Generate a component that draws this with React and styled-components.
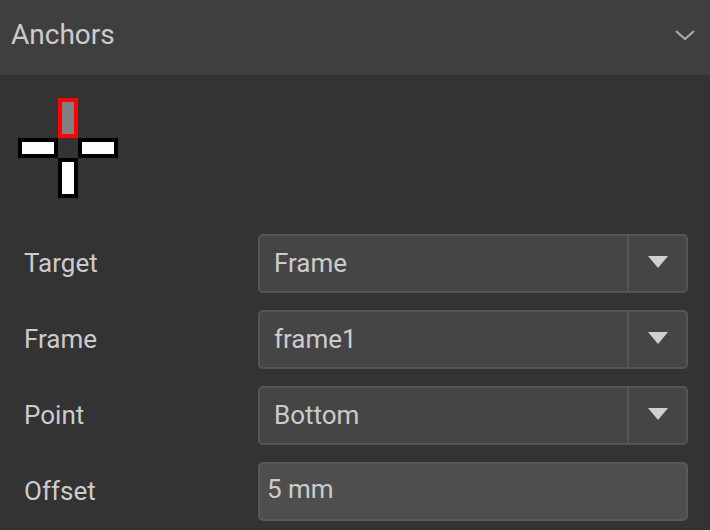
import styled, { createGlobalStyle } from 'styled-components';

const GlobalStyle = createGlobalStyle`
  html, body {
    margin: 0;
    padding: 0;
    background: #333333;
  }
  body {
    font-family: Roboto, "Liberation Sans", sans-serif;
  }
`;

const Panel = styled.div`
  width: 710px;
  height: 530px;
  background: #333333;
  overflow: hidden;
`;

const Header = styled.div`
  height: 75px;
  background: #3f3f3f;
  display: flex;
  align-items: center;
  justify-content: space-between;
  padding: 0 14px 6px 11px;
  box-sizing: border-box;
  color: #cccccc;
  font-size: 28px;
`;

const Body = styled.div`
  padding: 23px 22px 0 18px;
`;

const AnchorGrid = styled.div`
  display: grid;
  grid-template-columns: 40px 20px 40px;
  grid-template-rows: 40px 20px 40px;
  width: 100px;
`;

const Arm = styled.div`
  box-sizing: border-box;
  border: 4px solid ${(p) => (p.$active ? '#ff0000' : '#000000')};
  background: ${(p) => (p.$active ? '#808080' : '#ffffff')};
  grid-column: ${(p) => p.$col};
  grid-row: ${(p) => p.$row};
`;

const Fields = styled.div`
  margin-top: 36px;
  display: flex;
  flex-direction: column;
  gap: 17px;
  padding-left: 6px;
`;

const Row = styled.div`
  display: grid;
  grid-template-columns: 234px 1fr;
  align-items: center;
  height: 59px;
`;

const Label = styled.span`
  color: #cccccc;
  font-size: 26px;
  padding-bottom: 2px;
`;

const Select = styled.div`
  height: 59px;
  box-sizing: border-box;
  border: 2px solid #555555;
  border-radius: 5px;
  background: #454545;
  display: flex;
  align-items: stretch;
`;

const SelectValue = styled.div`
  flex: 1;
  display: flex;
  align-items: center;
  padding: 0 0 2px 14px;
  color: #cccccc;
  font-size: 26px;
`;

const SelectButton = styled.div`
  width: 59px;
  border-left: 2px solid #555555;
  display: flex;
  align-items: center;
  justify-content: center;
  padding-bottom: 4px;
  box-sizing: border-box;
`;

const Input = styled.div`
  height: 59px;
  box-sizing: border-box;
  border: 2px solid #585858;
  border-radius: 5px;
  background: #4e4e4e;
  display: flex;
  align-items: center;
  padding-left: 7px;
  padding-bottom: 6px;
  color: #cccccc;
  font-size: 26px;
`;

const Triangle = () => (
  <svg width="20" height="12" viewBox="0 0 20 12">
    <path d="M0 0 L20 0 L10 12 Z" fill="#d0d0d0" />
  </svg>
);

const Chevron = () => (
  <svg width="22" height="12" viewBox="0 0 22 12">
    <path d="M2 2 L11 10 L20 2" fill="none" stroke="#a8a8a8" strokeWidth="2.2" />
  </svg>
);

const selects = [
  { label: 'Target', value: 'Frame' },
  { label: 'Frame', value: 'frame1' },
  { label: 'Point', value: 'Bottom' }
];

export default function App() {
  return (
    <Panel>
      <GlobalStyle />
      <Header>
        <span>Anchors</span>
        <Chevron />
      </Header>
      <Body>
        <AnchorGrid>
          <Arm $col={2} $row={1} $active />
          <Arm $col={1} $row={2} />
          <Arm $col={3} $row={2} />
          <Arm $col={2} $row={3} />
        </AnchorGrid>
        <Fields>
          {selects.map((s) => (
            <Row key={s.label}>
              <Label>{s.label}</Label>
              <Select>
                <SelectValue>{s.value}</SelectValue>
                <SelectButton>
                  <Triangle />
                </SelectButton>
              </Select>
            </Row>
          ))}
          <Row>
            <Label>Offset</Label>
            <Input>5 mm</Input>
          </Row>
        </Fields>
      </Body>
    </Panel>
  );
}
